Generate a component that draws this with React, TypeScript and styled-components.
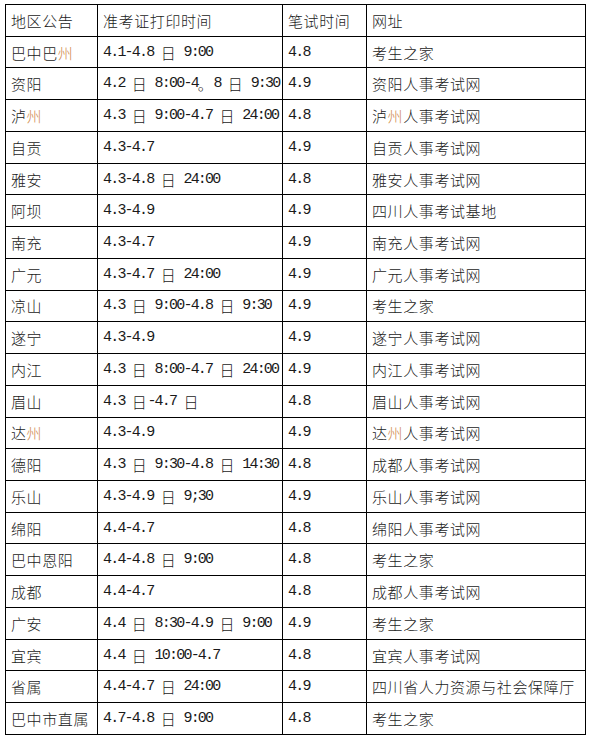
import React from 'react';
import styled, { createGlobalStyle } from 'styled-components';

const GlobalStyle = createGlobalStyle`
  html, body {
    margin: 0;
    padding: 0;
    background: #fff;
  }
  body {
    font-family: "Noto Sans CJK SC", "Liberation Sans", sans-serif;
    color: #1a1a1a;
  }
`;

const Page = styled.div`
  padding: 4px 0 0 5px;
`;

const Grid = styled.div`
  display: grid;
  grid-template-columns: 92px 185px 84px 219px;
  grid-auto-rows: 31.74px;
  width: max-content;
  border-left: 1px solid #000;
  border-top: 1px solid #000;
`;

const Cell = styled.div`
  box-sizing: border-box;
  display: flex;
  align-items: center;
  padding-left: 5px;
  border-right: 1px solid #000;
  border-bottom: 1px solid #000;
  font-size: 15px;
  font-weight: 300;
  letter-spacing: 0.6px;
  white-space: nowrap;
  overflow: hidden;
`;

const Latin = styled.span`
  font-family: "Liberation Mono", monospace;
  font-size: 15px;
  font-weight: 400;
  letter-spacing: -1.8px;
  white-space: pre;
`;

const Accent = styled.span`
  color: #d08a4e;
`;

type Row = [string, string, string, string];

const header: Row = ['地区公告', '准考证打印时间', '笔试时间', '网址'];

const rows: Row[] = [
  ['巴中巴州', '4.1-4.8 日 9:00', '4.8', '考生之家'],
  ['资阳', '4.2 日 8:00-4。8 日 9:30', '4.9', '资阳人事考试网'],
  ['泸州', '4.3 日 9:00-4.7 日 24:00', '4.8', '泸州人事考试网'],
  ['自贡', '4.3-4.7', '4.9', '自贡人事考试网'],
  ['雅安', '4.3-4.8 日 24:00', '4.8', '雅安人事考试网'],
  ['阿坝', '4.3-4.9', '4.9', '四川人事考试基地'],
  ['南充', '4.3-4.7', '4.9', '南充人事考试网'],
  ['广元', '4.3-4.7 日 24:00', '4.9', '广元人事考试网'],
  ['凉山', '4.3 日 9:00-4.8 日 9:30', '4.9', '考生之家'],
  ['遂宁', '4.3-4.9', '4.9', '遂宁人事考试网'],
  ['内江', '4.3 日 8:00-4.7 日 24:00', '4.9', '内江人事考试网'],
  ['眉山', '4.3 日-4.7 日', '4.8', '眉山人事考试网'],
  ['达州', '4.3-4.9', '4.9', '达州人事考试网'],
  ['德阳', '4.3 日 9:30-4.8 日 14:30', '4.8', '成都人事考试网'],
  ['乐山', '4.3-4.9 日 9;30', '4.9', '乐山人事考试网'],
  ['绵阳', '4.4-4.7', '4.8', '绵阳人事考试网'],
  ['巴中恩阳', '4.4-4.8 日 9:00', '4.8', '考生之家'],
  ['成都', '4.4-4.7', '4.8', '成都人事考试网'],
  ['广安', '4.4 日 8:30-4.9 日 9:00', '4.9', '考生之家'],
  ['宜宾', '4.4 日 10:00-4.7', '4.8', '宜宾人事考试网'],
  ['省属', '4.4-4.7 日 24:00', '4.9', '四川省人力资源与社会保障厅'],
  ['巴中市直属', '4.7-4.8 日 9:00', '4.8', '考生之家'],
];

const cjk = /[\u3000-\u9fff\uff00-\uffef]/;

// split into CJK runs and half-width runs so digits get a narrow mono face
const renderText = (text: string) =>
  text.split(/([\u3000-\u9fff\uff00-\uffef]+)/).map((part, i) => {
    if (!part) return null;
    if (cjk.test(part)) {
      return part.split(/(州)/).map((p, j) =>
        p === '州' ? (
          <Accent key={`${i}-${j}`}>{p}</Accent>
        ) : p ? (
          <span key={`${i}-${j}`}>{p}</span>
        ) : null
      );
    }
    return <Latin key={i}>{part}</Latin>;
  });

const App = () => (
  <Page>
    <GlobalStyle />
    <Grid>
      {[header, ...rows].map((row, r) =>
        row.map((text, c) => <Cell key={`${r}-${c}`}>{renderText(text)}</Cell>)
      )}
    </Grid>
  </Page>
);

export default App;
